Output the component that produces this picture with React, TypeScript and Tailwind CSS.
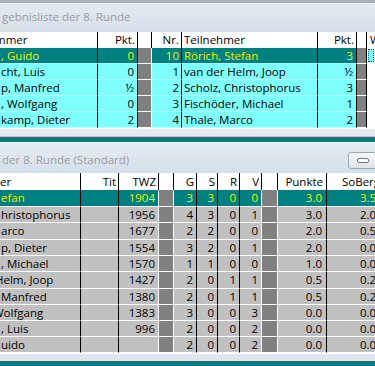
const SEL_BG = 'bg-[#008080] text-[#eef200]'

const topRows = [
  { name: ', Guido', pkt: '0', nr: '10', tn: 'Rörich, Stefan', pkt2: '3', sel: true },
  { name: 'cht, Luis', pkt: '0', nr: '1', tn: 'van der Helm, Joop', pkt2: '½', sel: false },
  { name: 'p, Manfred', pkt: '½', nr: '2', tn: 'Scholz, Christophorus', pkt2: '3', sel: false },
  { name: ', Wolfgang', pkt: '0', nr: '3', tn: 'Fischöder, Michael', pkt2: '1', sel: false },
  { name: 'kamp, Dieter', pkt: '2', nr: '4', tn: 'Thale, Marco', pkt2: '2', sel: false },
]

const standings = [
  { name: 'efan', twz: '1904', g: '3', s: '3', r: '0', v: '0', pts: '3.0', sob: '3.5', h: 'h-[17px]', sel: true },
  { name: 'hristophorus', twz: '1956', g: '4', s: '3', r: '0', v: '1', pts: '3.0', sob: '2.0', h: 'h-4', sel: false },
  { name: 'arco', twz: '1677', g: '2', s: '2', r: '0', v: '0', pts: '2.0', sob: '0.5', h: 'h-[17px]', sel: false },
  { name: 'p, Dieter', twz: '1554', g: '3', s: '2', r: '0', v: '1', pts: '2.0', sob: '0.0', h: 'h-4', sel: false },
  { name: ', Michael', twz: '1570', g: '1', s: '1', r: '0', v: '0', pts: '1.0', sob: '0.0', h: 'h-4', sel: false },
  { name: 'Helm, Joop', twz: '1427', g: '2', s: '0', r: '1', v: '1', pts: '0.5', sob: '0.2', h: 'h-[17px]', sel: false },
  { name: 'Manfred', twz: '1380', g: '2', s: '0', r: '1', v: '1', pts: '0.5', sob: '0.2', h: 'h-4', sel: false },
  { name: 'Wolfgang', twz: '1383', g: '3', s: '0', r: '0', v: '3', pts: '0.0', sob: '0.0', h: 'h-4', sel: false },
  { name: ', Luis', twz: '996', g: '2', s: '0', r: '0', v: '2', pts: '0.0', sob: '0.0', h: 'h-4', sel: false },
  { name: 'uido', twz: '', g: '2', s: '0', r: '0', v: '2', pts: '0.0', sob: '0.0', h: 'h-4', sel: false },
]

// shift for names whose first letter is cut by the window edge
const nameShift: Record<string, string> = {
  'Helm, Joop': '-ml-[6px]',
  Wolfgang: '-ml-[8px]',
}

function TitleBar({ title, pad, button }: { title: string; pad: string; button?: boolean }) {
  return (
    <div className={`flex items-start bg-linear-to-b from-[#e4ebf2] to-[#d5dfe9] ${pad}`}>
      <span className="pl-[2px] leading-4 text-[#9c9c9c] whitespace-nowrap">{title}</span>
      {button && (
        <div className="ml-auto -mr-[6px] flex h-[17px] w-[33px] shrink-0 items-start rounded-[3px] border border-[#9aa6b4] bg-linear-to-b from-[#f7f8f9] to-[#dfe3e8] pl-[8px] pt-[5px]">
          <div className="h-[5px] w-[12px] rounded-[2px] border border-[#6f7780] bg-white" />
        </div>
      )}
    </div>
  )
}

export default function App() {
  const cell = 'shrink-0 overflow-hidden whitespace-nowrap border-r border-b border-r-black border-b-white'
  const grey = 'shrink-0 border-r border-b border-white bg-[#808080]'
  const head = 'shrink-0 overflow-hidden whitespace-nowrap border-r border-black'

  return (
    <div className="flex h-[366px] w-[375px] flex-col overflow-hidden bg-[#008080] font-['Open_Sans',sans-serif] text-[11.5px] text-black">
      {/* upper window: Ergebnisliste */}
      <div className="flex flex-col bg-[#e4eaf0]">
        <div className="h-[3px] bg-[#a9b1ba]" />
        <div className="h-[29px] overflow-hidden">
          <TitleBar title="gebnisliste der 8. Runde" pad="h-[29px] pt-[6px]" />
        </div>

        <div className="flex h-4 bg-white leading-4">
          <div className={`${head} w-[98px]`}><span className="-ml-[5px]">mmer</span></div>
          <div className={`${head} w-[40px] pr-[2px] text-right`}>Pkt.</div>
          <div className={`${head} w-[14px]`} />
          <div className={`${head} w-[30px] pr-[2px] text-right`}>Nr.</div>
          <div className={`${head} w-[136px] pl-[2px]`}>Teilnehmer</div>
          <div className={`${head} w-[39px] pr-[2px] text-right`}>Pkt.</div>
          <div className={`${head} w-[10px]`} />
          <div className="flex-1 pl-[3px]">W</div>
        </div>

        {topRows.map((r) => (
          <div key={r.nr} className={`flex h-4 leading-[15px] ${r.sel ? SEL_BG : 'bg-[#80ffff]'}`}>
            <div className={`${cell} w-[98px] pl-px`}>{r.name}</div>
            <div className={`${cell} w-[40px] pr-[3px] text-right`}>{r.pkt}</div>
            <div className={`${grey} w-[14px]`} />
            <div className={`${cell} w-[30px] pr-[2px] text-right`}>{r.nr}</div>
            <div className={`${cell} w-[136px] pl-[2px]`}>{r.tn}</div>
            <div className={`${cell} w-[39px] pr-[3px] text-right`}>{r.pkt2}</div>
            <div className={`${grey} w-[10px] border-r-black`} />
            <div className="flex-1 border-b border-white bg-white p-px">
              {r.sel && <div className="h-full w-full border border-dotted border-[#404040] bg-[#80ffff]" />}
            </div>
          </div>
        ))}

        <div className="h-[9px] border-t border-b border-t-white border-b-[#b9c3cd] bg-[#e4eaf0]" />
      </div>

      <div className="h-[5px] shrink-0" />

      {/* lower window: Tabelle */}
      <div className="flex flex-col border-t border-[#f3f6f9] bg-[#e4eaf0]">
        <TitleBar title="der 8. Runde (Standard)" pad="h-[30px] pt-[9px]" button />

        <div className="flex h-[17px] bg-white leading-[17px]">
          <div className={`${head} w-[81px]`}>er</div>
          <div className={`${head} w-[38px] pr-[2px] text-right`}>Tit</div>
          <div className={`${head} w-[40px] pr-[2px] text-right`}>TWZ</div>
          <div className={`${head} w-[15px]`} />
          <div className={`${head} w-[23px] pr-[2px] text-right`}>G</div>
          <div className={`${head} w-[21px] pr-[2px] text-right`}>S</div>
          <div className={`${head} w-[22px] pr-[2px] text-right`}>R</div>
          <div className={`${head} w-[22px] pr-[2px] text-right`}>V</div>
          <div className={`${head} w-[16px]`} />
          <div className={`${head} w-[49px] pr-[3px] text-right`}>Punkte</div>
          <div className="flex-1 overflow-hidden whitespace-nowrap pl-[15px]">SoBerg</div>
        </div>

        {standings.map((r) => (
          <div key={r.name} className={`flex ${r.h} leading-[15px] ${r.sel ? SEL_BG : 'bg-[#c0c0c0]'}`}>
            <div className={`${cell} w-[81px] pl-px`}>
              <span className={`inline-block ${nameShift[r.name] ?? ''}`}>{r.name}</span>
            </div>
            <div className={`${cell} w-[38px]`} />
            <div className={`${cell} w-[40px] pr-[3px] text-right border-r-white`}>{r.twz}</div>
            <div className={`${grey} w-[15px]`} />
            <div className={`${cell} w-[23px] pr-[3px] text-right`}>{r.g}</div>
            <div className={`${cell} w-[21px] pr-[3px] text-right`}>{r.s}</div>
            <div className={`${cell} w-[22px] pr-[3px] text-right`}>{r.r}</div>
            <div className={`${cell} w-[22px] pr-[3px] text-right border-r-white`}>{r.v}</div>
            <div className={`${grey} w-[16px]`} />
            <div className={`${cell} w-[49px] pr-[4px] text-right`}>{r.pts}</div>
            <div className="flex-1 border-b border-white pl-[33px]">{r.sob}</div>
          </div>
        ))}

        <div className="h-[8px] border-t border-white bg-[#dfe6ee]" />
      </div>
    </div>
  )
}
